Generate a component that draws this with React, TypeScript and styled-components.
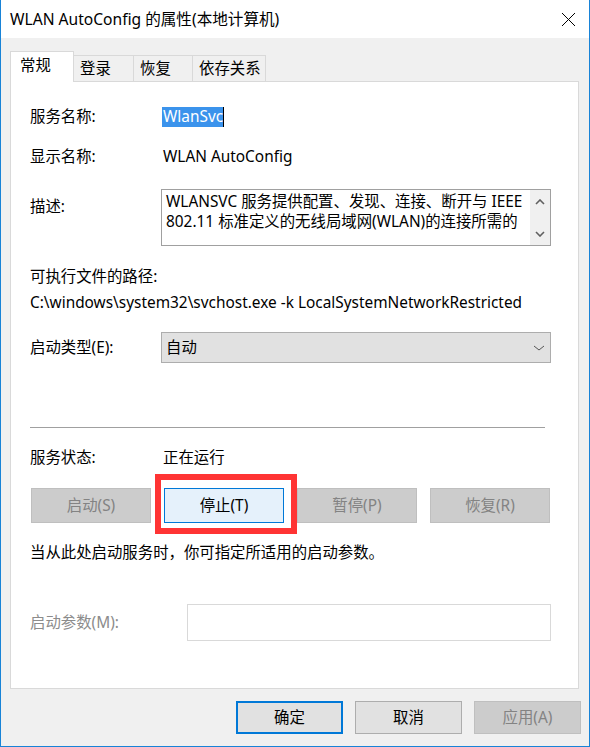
import React from "react";
import styled, { createGlobalStyle } from "styled-components";

const Global = createGlobalStyle`
  html, body { margin: 0; padding: 0; background: #ffffff; }
  body {
    font-family: "Noto Sans", "Noto Sans CJK SC", sans-serif;
    font-size: 15.4px;
    color: #000;
  }
  * { box-sizing: border-box; }
`;

const Window = styled.div`
  width: 590px;
  height: 747px;
  border-left: 1px solid #1883d7;
  border-right: 1px solid #1883d7;
  border-bottom: 1px solid #1883d7;
  display: flex;
  flex-direction: column;
  background: #f0f0f0;
`;

const TitleBar = styled.div`
  height: 38px;
  background: #ffffff;
  display: flex;
  align-items: center;
  justify-content: space-between;
  padding: 0 13px 0 9px;
  font-size: 15.6px;
  line-height: 20px;
`;

const CloseIcon = styled.svg`
  width: 15px;
  height: 15px;
  display: block;
`;

const Body = styled.div`
  flex: 1;
  display: flex;
  flex-direction: column;
  padding: 13px 10px 0 9px;
`;

const TabStrip = styled.div`
  display: flex;
  align-items: flex-end;
  height: 30px;
`;

const Tab = styled.div<{ $w: number; $active?: boolean }>`
  width: ${(p) => p.$w}px;
  height: ${(p) => (p.$active ? 31 : 26)}px;
  margin-bottom: ${(p) => (p.$active ? -1 : 0)}px;
  position: relative;
  z-index: ${(p) => (p.$active ? 1 : 0)};
  background: ${(p) => (p.$active ? "#ffffff" : "#f0f0f0")};
  border: 1px solid #d9d9d9;
  border-bottom: none;
  border-left: ${(p) => (p.$active ? "1px solid #d9d9d9" : "none")};
  display: flex;
  align-items: center;
  padding-left: ${(p) => (p.$active ? 9 : 6)}px;
  padding-bottom: ${(p) => (p.$active ? 3 : 0)}px;
  line-height: 20px;
`;

const Panel = styled.div`
  background: #ffffff;
  border: 1px solid #d9d9d9;
  height: 608px;
  padding: 25px 26px 0 19px;
  display: flex;
  flex-direction: column;
`;

const Row = styled.div<{ $mt: number; $col?: number; $top?: boolean }>`
  display: grid;
  grid-template-columns: ${(p) => p.$col ?? 131}px 1fr;
  align-items: ${(p) => (p.$top ? "start" : "center")};
  margin-top: ${(p) => p.$mt}px;
  min-height: 20px;
  line-height: 20px;
`;

const Label = styled.div<{ $disabled?: boolean; $pt?: number }>`
  color: ${(p) => (p.$disabled ? "#8c8c8c" : "#000")};
  padding-top: ${(p) => p.$pt ?? 0}px;
  white-space: nowrap;
`;

const Value = styled.div`
  padding-left: 2px;
  white-space: nowrap;
`;

const Selected = styled.span`
  display: inline-block;
  background: #3b93ec;
  color: #ffffff;
  height: 20px;
  padding: 0 0 0 1px;
  border-right: 1px solid #000;
  margin-left: -1px;
`;

const Line = styled.div<{ $mt: number }>`
  margin-top: ${(p) => p.$mt}px;
  line-height: 20px;
  white-space: nowrap;
`;

const TextArea = styled.div`
  width: 390px;
  height: 57px;
  border: 1px solid #a0a0a0;
  display: flex;
  overflow: hidden;
`;

const TextContent = styled.div`
  flex: 1;
  padding: 2px 0 0 4px;
  line-height: 20px;
  white-space: nowrap;
  overflow: hidden;
`;

const ScrollBar = styled.div`
  width: 20px;
  background: #f0f0f0;
  display: flex;
  flex-direction: column;
  justify-content: space-between;
  align-items: center;
  padding: 9px 0 8px;
`;

const Chevron = styled.svg`
  display: block;
`;

const Select = styled.div`
  width: 390px;
  height: 31px;
  background: #e1e1e1;
  border: 1px solid #adadad;
  display: flex;
  align-items: center;
  justify-content: space-between;
  padding: 0 5px 0 4px;
`;

const Separator = styled.div`
  margin-top: 64px;
  width: 515px;
  height: 1px;
  background: #a0a0a0;
`;

const ButtonRow = styled.div<{ $mt: number; $gap: number }>`
  display: flex;
  gap: ${(p) => p.$gap}px;
  margin-top: ${(p) => p.$mt}px;
  padding-left: 1px;
`;

const Button = styled.div<{ $w: number; $h: number; $variant?: "disabled" | "hot" | "default" | "normal" }>`
  width: ${(p) => p.$w}px;
  height: ${(p) => p.$h}px;
  display: flex;
  align-items: center;
  justify-content: center;
  line-height: 20px;
  background: ${(p) =>
    p.$variant === "disabled" ? "#cccccc" : p.$variant === "hot" ? "#e5f1fb" : "#e1e1e1"};
  color: ${(p) => (p.$variant === "disabled" ? "#838383" : "#000")};
  border: ${(p) =>
    p.$variant === "disabled"
      ? "1px solid #bfbfbf"
      : p.$variant === "hot"
      ? "1px solid #0078d7"
      : p.$variant === "default"
      ? "2px solid #0078d7"
      : "1px solid #adadad"};
`;

const Highlight = styled.div`
  position: relative;
`;

const RedFrame = styled.div`
  position: absolute;
  left: -9px;
  right: -13px;
  top: -14px;
  bottom: -11px;
  border: 6px solid #ff3434;
  pointer-events: none;
`;

const Input = styled.div`
  width: 364px;
  height: 37px;
  background: #ffffff;
  border: 1px solid #d9d9d9;
`;

const Footer = styled.div`
  display: flex;
  justify-content: flex-end;
  gap: 12px;
  margin-top: 12px;
  margin-right: -2px;
`;

const ChevronUp = () => (
  <Chevron width="10" height="6" viewBox="0 0 10 6">
    <path d="M1 5 L5 1 L9 5" fill="none" stroke="#606060" strokeWidth="1.6" />
  </Chevron>
);

const ChevronDown = ({ w = 10, c = "#606060", sw = 1.6 }: { w?: number; c?: string; sw?: number }) => (
  <Chevron width={w} height="6" viewBox={`0 0 ${w} 6`}>
    <path d={`M1 1 L${w / 2} 5 L${w - 1} 1`} fill="none" stroke={c} strokeWidth={sw} />
  </Chevron>
);

export default function App() {
  return (
    <>
      <Global />
      <Window>
        <TitleBar>
          <span>WLAN AutoConfig 的属性(本地计算机)</span>
          <CloseIcon viewBox="0 0 15 15">
            <path d="M1 1 L14 14 M14 1 L1 14" stroke="#000" strokeWidth="1" />
          </CloseIcon>
        </TitleBar>
        <Body>
          <TabStrip>
            <Tab $w={64} $active>常规</Tab>
            <Tab $w={60}>登录</Tab>
            <Tab $w={59}>恢复</Tab>
            <Tab $w={73}>依存关系</Tab>
          </TabStrip>
          <Panel>
            <Row $mt={0}>
              <Label>服务名称:</Label>
              <Value>
                <Selected>WlanSvc</Selected>
              </Value>
            </Row>
            <Row $mt={20}>
              <Label>显示名称:</Label>
              <Value>WLAN AutoConfig</Value>
            </Row>
            <Row $mt={22} $top>
              <Label $pt={8}>描述:</Label>
              <TextArea>
                <TextContent>
                  <div>WLANSVC 服务提供配置、发现、连接、断开与 IEEE</div>
                  <div>802.11 标准定义的无线局域网(WLAN)的连接所需的</div>
                </TextContent>
                <ScrollBar>
                  <ChevronUp />
                  <ChevronDown />
                </ScrollBar>
              </TextArea>
            </Row>
            <Line $mt={21}>可执行文件的路径:</Line>
            <Line $mt={6}>C:\windows\system32\svchost.exe -k LocalSystemNetworkRestricted</Line>
            <Row $mt={19}>
              <Label>启动类型(E):</Label>
              <Select>
                <span>自动</span>
                <ChevronDown w={12} c="#555" sw={1} />
              </Select>
            </Row>
            <Separator />
            <Row $mt={20}>
              <Label>服务状态:</Label>
              <Value>正在运行</Value>
            </Row>
            <ButtonRow $mt={20} $gap={13}>
              <Button $w={120} $h={35} $variant="disabled">启动(S)</Button>
              <Highlight>
                <Button $w={120} $h={35} $variant="hot">停止(T)</Button>
                <RedFrame />
              </Highlight>
              <Button $w={120} $h={35} $variant="disabled">暂停(P)</Button>
              <Button $w={120} $h={35} $variant="disabled">恢复(R)</Button>
            </ButtonRow>
            <Line $mt={20}>当从此处启动服务时，你可指定所适用的启动参数。</Line>
            <Row $mt={41} $col={157}>
              <Label $disabled>启动参数(M):</Label>
              <Input />
            </Row>
          </Panel>
          <Footer>
            <Button $w={107} $h={33} $variant="default">确定</Button>
            <Button $w={107} $h={33} $variant="normal">取消</Button>
            <Button $w={107} $h={33} $variant="disabled">应用(A)</Button>
          </Footer>
        </Body>
      </Window>
    </>
  );
}
